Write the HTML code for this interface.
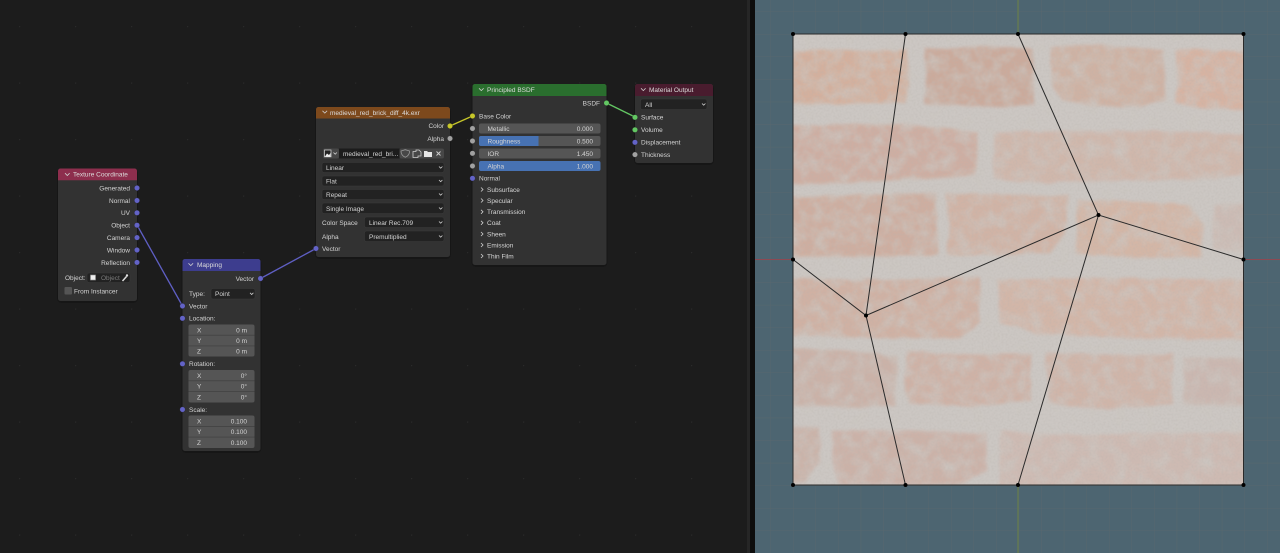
<!DOCTYPE html>
<html lang="en"><head><meta charset="utf-8"><title>Blender shader nodes</title>
<style>
html,body{margin:0;padding:0;background:#1d1d1d;width:1280px;height:553px;overflow:hidden}
svg{display:block}
text{font-family:"Liberation Sans",sans-serif;font-size:6.5px;fill:#d4d4d4}
.r{text-anchor:end}
.h{fill:#dcdcdc}
.d{fill:#7c7c7c}
.node{fill:#303030;filter:url(#sh)}
.dd{fill:#202020;stroke:#3a3a3a;stroke-width:.5}
.ch{fill:none;stroke:#cfcfcf;stroke-width:.8}
.f{fill:#545454}
.w{fill:none;stroke-width:1.3}
.sep{stroke:#3c3c3c;stroke-width:.6}
</style></head><body>
<svg width="1280" height="553" viewBox="0 0 1280 553" xmlns="http://www.w3.org/2000/svg">
<defs>
<filter id="soft" filterUnits="userSpaceOnUse" x="0" y="0" width="1280" height="553"><feGaussianBlur stdDeviation=".32"/></filter>
<filter id="sh" x="-15%" y="-15%" width="130%" height="130%"><feDropShadow dx="0" dy="1" stdDeviation="1.5" flood-color="#000" flood-opacity=".45"/></filter>
<filter id="rough" color-interpolation-filters="sRGB" x="-5%" y="-5%" width="110%" height="110%"><feTurbulence type="fractalNoise" baseFrequency=".05" numOctaves="3" seed="4"/><feDisplacementMap in="SourceGraphic" scale="5" xChannelSelector="R" yChannelSelector="G"/><feGaussianBlur stdDeviation="1.6"/><feColorMatrix values=".95 0 0 0 0  0 .94 0 0 0  0 0 .95 0 0  0 0 0 1 0"/></filter>
<filter id="noise" color-interpolation-filters="sRGB" x="0" y="0" width="100%" height="100%"><feTurbulence type="fractalNoise" baseFrequency=".5" numOctaves="2" seed="8"/><feColorMatrix values="0 0 0 0 .72  0 0 0 0 .70  0 0 0 0 .68  .6 0 0 0 -.22"/></filter>
<filter id="mottle" color-interpolation-filters="sRGB" x="0" y="0" width="100%" height="100%"><feTurbulence type="fractalNoise" baseFrequency=".07" numOctaves="3" seed="21"/><feColorMatrix values="0 0 0 0 .80  0 0 0 0 .78  0 0 0 0 .76  1.5 0 0 0 -.55"/></filter>
<pattern id="dots" width="56" height="56.5" patternUnits="userSpaceOnUse" x="19" y="26"><rect width="1.2" height="1.2" fill="#2b2b2b"/></pattern>
<pattern id="grid" width="22.57" height="22.57" patternUnits="userSpaceOnUse" x="793" y="34"><path d="M0 0V22.57M0 0H22.57" fill="none" stroke="#5b676d" stroke-width=".8"/></pattern>
<clipPath id="img"><rect x="793" y="34" width="450.5" height="451"/></clipPath>
</defs>

<g filter="url(#soft)">
<rect width="748" height="553" fill="#1d1d1d"/>
<rect width="748" height="553" fill="url(#dots)"/>
<rect x="747" width="3" height="553" fill="#262626"/>
<rect x="750" width="5" height="553" fill="#111"/>

<!-- UV editor -->
<rect x="755" width="525" height="553" fill="#4d6571"/>
<rect x="755" width="525" height="553" fill="url(#grid)"/>
<path d="M755 259.5H793M1243.5 259.5H1280" stroke="#8d4a52" stroke-width=".9"/>
<path d="M1018 0V34M1018 485V553" stroke="#6a8245" stroke-width="1"/>
<rect x="793" y="34" width="450.5" height="451" fill="#ccc7c3"/>
<g clip-path="url(#img)">
<g filter="url(#rough)" opacity=".8">
<polygon fill="#e2b69c" points="785,50 860,51 907,50 909,85 905,102 850,104 785,103"/>
<polygon fill="#d6ae9a" points="925,48 990,47 1032,50 1034,105 980,107 924,105 926,80"/>
<polygon fill="#dbb8a4" points="1051,46 1100,45 1163,50 1166,100 1140,108 1090,106 1062,100 1052,85"/>
<polygon fill="#e5baa3" points="1176,50 1251,51 1251,111 1200,107 1176,103 1178,80"/>
<polygon fill="#dab4a2" points="785,126 860,124 905,124 978,132 976,175 940,178 860,182 785,185"/>
<polygon fill="#ddbfaf" points="994,133 1040,131 1150,131 1251,134 1251,172 1215,179 1110,181 1020,183 994,178"/>
<polygon fill="#dab4a0" points="785,197 860,195 935,193 937,230 939,255 860,257 785,257"/>
<polygon fill="#debaa6" points="946,193 1000,195 1068,196 1065,235 1050,252 1000,255 947,255 950,225"/>
<polygon fill="#e1bda7" points="1078,200 1130,201 1190,205 1203,225 1201,257 1130,258 1076,254"/>
<polygon fill="#d8c5ba" points="1214,205 1251,204 1251,252 1213,250"/>
<polygon fill="#dcb7a4" points="785,278 880,280 980,277 980,322 960,338 870,338 785,335"/>
<polygon fill="#e0bdaa" points="998,280 1080,278 1180,279 1251,280 1251,340 1130,338 1040,334 1000,322"/>
<polygon fill="#d6b9aa" points="785,349 840,350 897,356 895,405 850,407 785,405"/>
<polygon fill="#dbb8a7" points="908,352 960,354 1031,354 1031,400 975,406 910,404 905,380"/>
<polygon fill="#dcbcac" points="1044,353 1110,355 1173,354 1172,405 1100,409 1050,404"/>
<polygon fill="#d6c0b5" points="1184,358 1251,358 1251,405 1183,405"/>
<polygon fill="#d6baac" points="785,428 820,428 820,462 805,483 785,483"/>
<polygon fill="#d8b9ab" points="832,431 900,430 987,434 988,470 960,485 840,485 832,465"/>
<polygon fill="#dac3b7" points="1000,432 1100,435 1251,431 1251,486 1000,486"/>
</g>
<rect x="793" y="34" width="450.5" height="451" filter="url(#mottle)"/>
<rect x="793" y="34" width="450.5" height="451" filter="url(#noise)"/>
</g>
<g fill="none" stroke="#2a2a2a" stroke-width="1">
<rect x="793" y="34" width="450.5" height="451"/>
<path d="M905.5 34L866 315.5L905.5 485M1018 34L1098.5 215L1018 485M793 259.5L866 315.5L1098.5 215L1243.5 259.5"/>
</g>
<g fill="#050505">
<circle cx="793" cy="34" r="2"/><circle cx="905.5" cy="34" r="2"/><circle cx="1018" cy="34" r="2"/><circle cx="1243.5" cy="34" r="2"/>
<circle cx="793" cy="259.5" r="2"/><circle cx="1243.5" cy="259.5" r="2"/>
<circle cx="793" cy="485" r="2"/><circle cx="905.5" cy="485" r="2"/><circle cx="1018" cy="485" r="2"/><circle cx="1243.5" cy="485" r="2"/>
<circle cx="866" cy="315.5" r="2"/><circle cx="1098.5" cy="215" r="2"/>
</g>

<!-- wires -->
<path class="w" stroke="#5f5fc4" d="M137 225L182.5 306M260.5 278.5L316 248.5"/>
<path class="w" stroke="#c7c729" d="M450 126L472.5 116"/>
<path class="w" stroke="#63c763" d="M606.5 103L635 117"/>

<!-- Texture Coordinate -->
<rect class="node" x="58" y="168.5" width="79" height="132.5" rx="2.5"/>
<path d="M58 180.3V171a2.5 2.5 0 0 1 2.5-2.5h74a2.5 2.5 0 0 1 2.5 2.5v9.3z" fill="#8d2f4d"/>
<path class="ch" d="M65 173.2l2.3 2.3 2.3-2.3"/>
<text class="h" x="73" y="176.6">Texture Coordinate</text>
<text class="r" x="130" y="190.5">Generated</text>
<text class="r" x="130" y="203">Normal</text>
<text class="r" x="130" y="215">UV</text>
<text class="r" x="130" y="227.5">Object</text>
<text class="r" x="130" y="240">Camera</text>
<text class="r" x="130" y="252.5">Window</text>
<text class="r" x="130" y="264.8">Reflection</text>
<text x="65" y="280">Object:</text>
<rect class="dd" x="87" y="273" width="43" height="9.5" rx="2"/>
<rect x="90.5" y="275" width="5" height="5" fill="#eee" stroke="#999" stroke-width=".6"/>
<text class="d" x="101" y="280.2">Object</text>
<path d="M122.5 281L126.5 276.5" stroke="#ddd" stroke-width="1.5"/><circle cx="127" cy="275.5" r="1.2" fill="#ddd"/>
<rect x="64.5" y="287" width="7.5" height="7.5" rx="1" fill="#545454"/>
<text x="74" y="293.5">From Instancer</text>

<!-- Mapping -->
<rect class="node" x="182.5" y="259" width="78" height="192" rx="2.5"/>
<path d="M182.5 271V261.5a2.5 2.5 0 0 1 2.5-2.5h73a2.5 2.5 0 0 1 2.5 2.5V271z" fill="#3e3e8e"/>
<path class="ch" d="M188.5 263.3l2.3 2.3 2.3-2.3"/>
<text class="h" x="197" y="267.2">Mapping</text>
<text class="r" x="254" y="281">Vector</text>
<text x="189" y="296">Type:</text>
<rect class="dd" x="211" y="288.5" width="44" height="10.5" rx="2"/>
<text x="215" y="296">Point</text>
<path class="ch" d="M250 292.8l1.7 1.7 1.7-1.7"/>
<text x="189" y="308.3">Vector</text>
<text x="189" y="320.5">Location:</text>
<rect class="f" x="188.5" y="324.5" width="66" height="32" rx="2"/>
<path class="sep" d="M188.5 335.2H254.5M188.5 345.9H254.5"/>
<text x="197" y="332.5">X</text><text class="r" x="247" y="332.5">0 m</text>
<text x="197" y="342.8">Y</text><text class="r" x="247" y="342.8">0 m</text>
<text x="197" y="353.5">Z</text><text class="r" x="247" y="353.5">0 m</text>
<text x="189" y="366">Rotation:</text>
<rect class="f" x="188.5" y="370" width="66" height="32.5" rx="2"/>
<path class="sep" d="M188.5 380.8H254.5M188.5 391.6H254.5"/>
<text x="197" y="377.8">X</text><text class="r" x="247" y="377.8">0°</text>
<text x="197" y="388.5">Y</text><text class="r" x="247" y="388.5">0°</text>
<text x="197" y="399.3">Z</text><text class="r" x="247" y="399.3">0°</text>
<text x="189" y="412">Scale:</text>
<rect class="f" x="188.5" y="415.5" width="66" height="32.5" rx="2"/>
<path class="sep" d="M188.5 426.3H254.5M188.5 437.1H254.5"/>
<text x="197" y="423.3">X</text><text class="r" x="247" y="423.3">0.100</text>
<text x="197" y="434">Y</text><text class="r" x="247" y="434">0.100</text>
<text x="197" y="444.8">Z</text><text class="r" x="247" y="444.8">0.100</text>

<!-- Image Texture -->
<rect class="node" x="316" y="107" width="134" height="150" rx="2.5"/>
<path d="M316 118.5V109.5a2.5 2.5 0 0 1 2.5-2.5h129a2.5 2.5 0 0 1 2.5 2.5V118.5z" fill="#7d4a1f"/>
<path class="ch" d="M322.5 110.8l2.3 2.3 2.3-2.3"/>
<text class="h" x="330" y="114.8">medieval_red_brick_diff_4k.exr</text>
<text class="r" x="444" y="128">Color</text>
<text class="r" x="444" y="141">Alpha</text>
<rect x="323" y="148.5" width="16" height="10" rx="2" fill="#474747"/>
<rect x="324.5" y="150" width="6.5" height="6.8" fill="#222" stroke="#ddd" stroke-width=".7"/>
<path d="M325 156.5l2-3 2 1.5 1.5-2v3.5z" fill="#eee"/>
<path class="ch" d="M333.5 152.5l1.7 1.7 1.7-1.7"/>
<rect x="339" y="148.5" width="60.5" height="10" fill="#1f1f1f"/>
<text x="343" y="155.8">medieval_red_bri...</text>
<rect x="399.5" y="148.5" width="44.5" height="10" rx="2" fill="#474747"/>
<path d="M401 151l4.3-1.3 4.3 1.3c0 3-1.3 5-4.3 6.3-3-1.3-4.3-3.3-4.3-6.3z" fill="none" stroke="#999" stroke-width=".8"/>
<path d="M413 151.5h3v-1.5h3l2 2v4h-3v1.5h-5z" fill="none" stroke="#cfcfcf" stroke-width=".8"/>
<path d="M424 151h3l1 1h4v5h-8z" fill="#e6e6e6"/>
<path d="M436.5 151.5l4 4M440.5 151.5l-4 4" stroke="#cfcfcf" stroke-width=".9"/>
<rect class="dd" x="322" y="162.5" width="122" height="10" rx="2"/>
<text x="326" y="169.8">Linear</text><path class="ch" d="M439 166.5l1.7 1.7 1.7-1.7"/>
<rect class="dd" x="322" y="176" width="122" height="10" rx="2"/>
<text x="326" y="183.3">Flat</text><path class="ch" d="M439 180l1.7 1.7 1.7-1.7"/>
<rect class="dd" x="322" y="189.5" width="122" height="10" rx="2"/>
<text x="326" y="197">Repeat</text><path class="ch" d="M439 193.5l1.7 1.7 1.7-1.7"/>
<rect class="dd" x="322" y="203" width="122" height="10.5" rx="2"/>
<text x="326" y="211">Single Image</text><path class="ch" d="M439 207.5l1.7 1.7 1.7-1.7"/>
<text x="322" y="224.8">Color Space</text>
<rect class="dd" x="364.5" y="217" width="79.5" height="10.5" rx="2"/>
<text x="369" y="224.8">Linear Rec.709</text><path class="ch" d="M439 221.5l1.7 1.7 1.7-1.7"/>
<text x="322" y="238.8">Alpha</text>
<rect class="dd" x="364.5" y="231" width="79.5" height="10.5" rx="2"/>
<text x="369" y="238.8">Premultiplied</text><path class="ch" d="M439 235.5l1.7 1.7 1.7-1.7"/>
<text x="322" y="251">Vector</text>

<!-- Principled BSDF -->
<rect class="node" x="472.5" y="84" width="134" height="181" rx="2.5"/>
<path d="M472.5 96V86.5a2.5 2.5 0 0 1 2.5-2.5h129a2.5 2.5 0 0 1 2.5 2.5V96z" fill="#2b6e2d"/>
<path class="ch" d="M479 88.3l2.3 2.3 2.3-2.3"/>
<text class="h" x="487" y="92.2">Principled BSDF</text>
<text class="r" x="600" y="105.5">BSDF</text>
<text x="479" y="118.5">Base Color</text>
<rect class="f" x="479" y="123.5" width="121.5" height="10" rx="2"/>
<text x="487.5" y="130.8">Metallic</text><text class="r" x="593" y="130.8">0.000</text>
<rect class="f" x="479" y="136" width="121.5" height="10" rx="2"/>
<path d="M481 136h57.5v10H481a2 2 0 0 1-2-2v-6a2 2 0 0 1 2-2z" fill="#4772b3"/>
<text x="487.5" y="143.5">Roughness</text><text class="r" x="593" y="143.5">0.500</text>
<rect class="f" x="479" y="148.5" width="121.5" height="10" rx="2"/>
<text x="487.5" y="155.8">IOR</text><text class="r" x="593" y="155.8">1.450</text>
<rect x="479" y="161" width="121.5" height="10" rx="2" fill="#4772b3"/>
<text x="487.5" y="168.5">Alpha</text><text class="r" x="593" y="168.5">1.000</text>
<text x="479" y="180.5">Normal</text>
<path class="ch" d="M481 187.5l2 2-2 2M481 198.5l2 2-2 2M481 209.8l2 2-2 2M481 220.8l2 2-2 2M481 232l2 2-2 2M481 243l2 2-2 2M481 254l2 2-2 2"/>
<text x="487" y="192">Subsurface</text>
<text x="487" y="203">Specular</text>
<text x="487" y="214">Transmission</text>
<text x="487" y="225">Coat</text>
<text x="487" y="236.5">Sheen</text>
<text x="487" y="247.5">Emission</text>
<text x="487" y="258.5">Thin Film</text>

<!-- Material Output -->
<rect class="node" x="635" y="84" width="78" height="79" rx="2.5"/>
<path d="M635 96V86.5a2.5 2.5 0 0 1 2.5-2.5h73a2.5 2.5 0 0 1 2.5 2.5V96z" fill="#4a1e2e"/>
<path class="ch" d="M641 88.3l2.3 2.3 2.3-2.3"/>
<text class="h" x="649" y="92.2">Material Output</text>
<rect class="dd" x="640.5" y="99" width="66.5" height="10.5" rx="2"/>
<text x="645" y="107">All</text><path class="ch" d="M702 103.5l1.7 1.7 1.7-1.7"/>
<text x="641" y="119.5">Surface</text>
<text x="641" y="132">Volume</text>
<text x="641" y="144.5">Displacement</text>
<text x="641" y="157">Thickness</text>

<!-- sockets -->
<g fill="#6363c7" stroke="#1c1c1c" stroke-width=".3">
<circle cx="137" cy="188" r="2.7"/><circle cx="137" cy="200.5" r="2.7"/><circle cx="137" cy="212.8" r="2.7"/><circle cx="137" cy="225.2" r="2.7"/><circle cx="137" cy="237.6" r="2.7"/><circle cx="137" cy="250" r="2.7"/><circle cx="137" cy="262.4" r="2.7"/>
<circle cx="260.5" cy="278.5" r="2.7"/><circle cx="182.5" cy="306" r="2.7"/><circle cx="182.5" cy="318.3" r="2.7"/><circle cx="182.5" cy="363.8" r="2.7"/><circle cx="182.5" cy="409.5" r="2.7"/>
<circle cx="316" cy="248.5" r="2.7"/><circle cx="472.5" cy="178.3" r="2.7"/><circle cx="635" cy="142.3" r="2.7"/>
</g>
<g fill="#c7c729" stroke="#1c1c1c" stroke-width=".3"><circle cx="450" cy="126" r="2.7"/><circle cx="472.5" cy="116" r="2.7"/></g>
<g fill="#a1a1a1" stroke="#1c1c1c" stroke-width=".3"><circle cx="450" cy="138.5" r="2.7"/><circle cx="472.5" cy="128.5" r="2.7"/><circle cx="472.5" cy="141" r="2.7"/><circle cx="472.5" cy="153.3" r="2.7"/><circle cx="472.5" cy="166" r="2.7"/><circle cx="635" cy="154.6" r="2.7"/></g>
<g fill="#63c763" stroke="#1c1c1c" stroke-width=".3"><circle cx="606.5" cy="103" r="2.7"/><circle cx="635" cy="117.3" r="2.7"/><circle cx="635" cy="129.8" r="2.7"/></g>
</g>
</svg>
</body></html>
